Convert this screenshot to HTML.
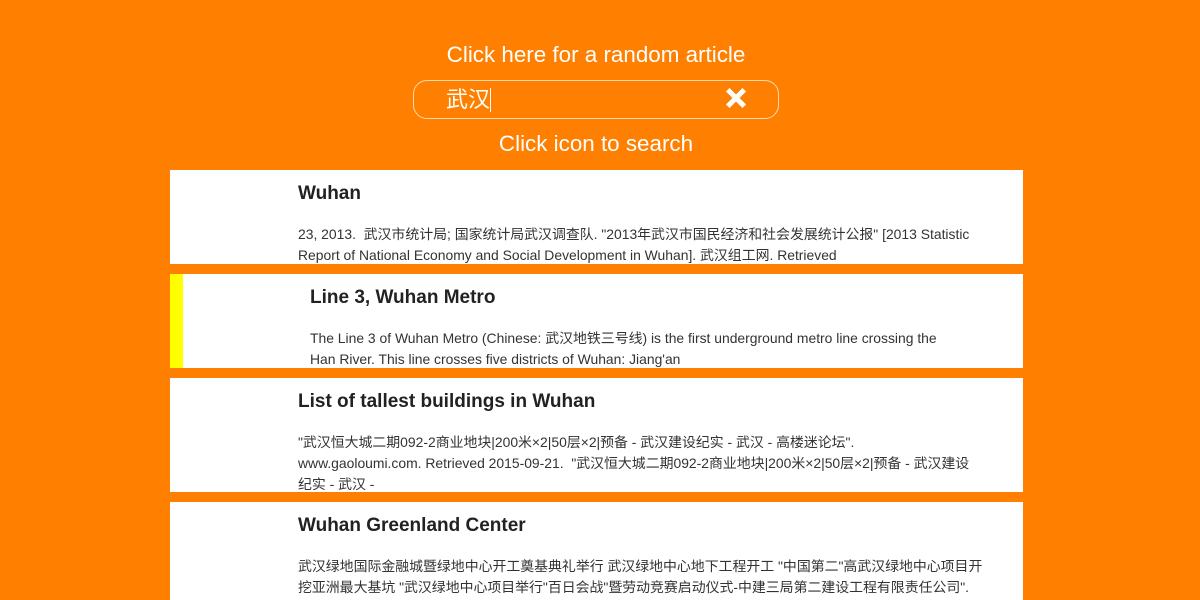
<!DOCTYPE html>
<html><head><meta charset="utf-8"><style>
body{margin:0;width:1200px;height:600px;overflow:hidden;background:#ff8000;font-family:"Liberation Sans","Noto Sans CJK SC",sans-serif;position:relative}
.top{position:absolute;left:-4px;width:1200px;text-align:center;color:#fff;font-size:22.4px}
.search{position:absolute;left:413px;top:80px;width:364px;height:37px;border:1px solid #ffd9b0;border-radius:14px}
.search .q{position:absolute;left:32px;top:6px;color:#fff;font-size:22px;line-height:26px}
.search .q span{display:inline-block;width:1px;height:24px;background:#fff;vertical-align:-5px}
.x{position:absolute;left:312px;top:7px}
.card{position:absolute;left:170px;width:853px;background:#fff;overflow:hidden;color:#333}
.card h2{position:absolute;left:128px;top:13px;margin:0;font-size:19px;font-weight:bold;color:#222}
.card p{position:absolute;left:128px;top:54px;margin:0;width:680px;font-size:13.9px;line-height:21px}
</style></head><body>
<div class="top" style="top:42px">Click here for a random article</div>
<div class="search"><div class="q">武汉<span></span></div>
<svg class="x" width="20" height="20" viewBox="0 0 20 20"><path d="M3.5 3.5L16.5 16.5M16.5 3.5L3.5 16.5" stroke="#fff" stroke-width="5" stroke-linecap="square"/></svg></div>
<div class="top" style="top:131px">Click icon to search</div>

<div class="card" style="top:170px;height:94px"><h2>Wuhan</h2><p>23, 2013. &nbsp;武汉市统计局; 国家统计局武汉调查队. "2013年武汉市国民经济和社会发展统计公报" [2013 Statistic Report of National Economy and Social Development in Wuhan]. 武汉组工网. Retrieved</p></div>
<div class="card" style="top:274px;height:94px;border-left:13px solid #ff0;width:840px"><h2 style="left:127px">Line 3, Wuhan Metro</h2><p style="left:127px;width:665px">The Line 3 of Wuhan Metro (Chinese: 武汉地铁三号线) is the first underground metro line crossing the<br>Han River. This line crosses five districts of Wuhan: Jiang'an</p></div>
<div class="card" style="top:378px;height:114px"><h2>List of tallest buildings in Wuhan</h2><p>"武汉恒大城二期092-2商业地块|200米×2|50层×2|预备 - 武汉建设纪实 - 武汉 - 高楼迷论坛". www.gaoloumi.com. Retrieved 2015-09-21. &nbsp;"武汉恒大城二期092-2商业地块|200米×2|50层×2|预备 - 武汉建设纪实 - 武汉 -</p></div>
<div class="card" style="top:502px;height:98px"><h2>Wuhan Greenland Center</h2><p style="width:700px">武汉绿地国际金融城暨绿地中心开工奠基典礼举行 武汉绿地中心地下工程开工 "中国第二"高武汉绿地中心项目开<br>挖亚洲最大基坑 "武汉绿地中心项目举行"百日会战"暨劳动竞赛启动仪式-中建三局第二建设工程有限责任公司".</p></div>
</body></html>
